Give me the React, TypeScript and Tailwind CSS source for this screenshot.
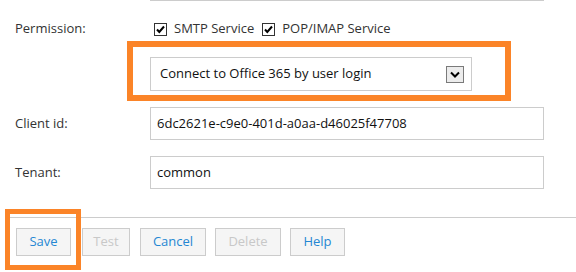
function Check() {
  return (
    <svg width="13" height="13" viewBox="0 0 13 13" className="shrink-0">
      <rect x="0.5" y="0.5" width="12" height="12" fill="#fff" stroke="#333" />
      <path d="M3 6.5 L5.3 9 L10 3.5" fill="none" stroke="#000" strokeWidth="2" />
    </svg>
  );
}

function Btn({ label, className, disabled }: { label: string; className: string; disabled?: boolean }) {
  return (
    <button
      className={
        "h-[28px] border border-[#cccccc] bg-[#f5f5f5] text-[13px] " +
        (disabled ? "text-[#c8c8c8] " : "text-[#2587d3] ") +
        className
      }
    >
      {label}
    </button>
  );
}

export default function App() {
  return (
    <div className="w-[576px] h-[272px] bg-white overflow-hidden text-[13px] text-[#333] font-['Segoe_UI','Open_Sans',sans-serif]">
      {/* end of previous field */}
      <div className="ml-[150px] w-[394px] h-px bg-[#cccccc]" />

      {/* Permission */}
      <div className="flex items-center h-[16px] mt-[20px]">
        <div className="w-[150px] pl-[15px]">Permission:</div>
        <div className="flex items-center ml-[4px]">
          <Check />
          <span className="ml-[7px]">SMTP Service</span>
          <span className="ml-[8px]"><Check /></span>
          <span className="ml-[7px]">POP/IMAP Service</span>
        </div>
      </div>

      {/* Auth type */}
      <div className="flex mt-[4px]">
        <div className="w-[127px]" />
        <div className="border-[6px] border-[#fb8428] pt-[10px] pb-[4px] pl-[17px] pr-[33px]">
          <div className="w-[322px] h-[34px] border border-[#cccccc] flex items-center justify-between pl-[9px] pr-[7px] text-[#111]">
            <span>Connect to Office 365 by user login</span>
            <span className="w-[18px] h-[17px] border border-[#7a7a7a] bg-[#ececec] flex items-center justify-center">
              <svg width="10" height="7" viewBox="0 0 10 7">
                <path d="M1 1.5 L5 5.5 L9 1.5" fill="none" stroke="#000" strokeWidth="2" />
              </svg>
            </span>
          </div>
        </div>
      </div>

      {/* Client id */}
      <div className="flex items-center mt-[6px]">
        <div className="w-[150px] pl-[15px]">Client id:</div>
        <div className="w-[394px] h-[33px] border border-[#cccccc] flex items-center pl-[6px] text-[#111]">
          6dc2621e-c9e0-401d-a0aa-d46025f47708
        </div>
      </div>

      {/* Tenant */}
      <div className="flex items-center mt-[16px]">
        <div className="w-[150px] pl-[15px]">Tenant:</div>
        <div className="w-[394px] h-[33px] border border-[#cccccc] flex items-center pl-[6px] text-[#111]">
          common
        </div>
      </div>

      <div className="ml-[10px] mt-[28px] h-px bg-[#cccccc]" />

      {/* Actions */}
      <div className="flex mt-[10px] pl-[16px]">
        <div className="relative">
          <Btn label="Save" className="w-[55px]" />
          <span className="absolute -left-[11px] -top-[19px] -right-[10px] -bottom-[14px] border-[5px] border-[#fb8428] pointer-events-none" />
        </div>
        <Btn label="Test" className="w-[48px] ml-[11px]" disabled />
        <Btn label="Cancel" className="w-[66px] ml-[10px]" />
        <Btn label="Delete" className="w-[66px] ml-[9px]" disabled />
        <Btn label="Help" className="w-[55px] ml-[9px]" />
      </div>
    </div>
  );
}
